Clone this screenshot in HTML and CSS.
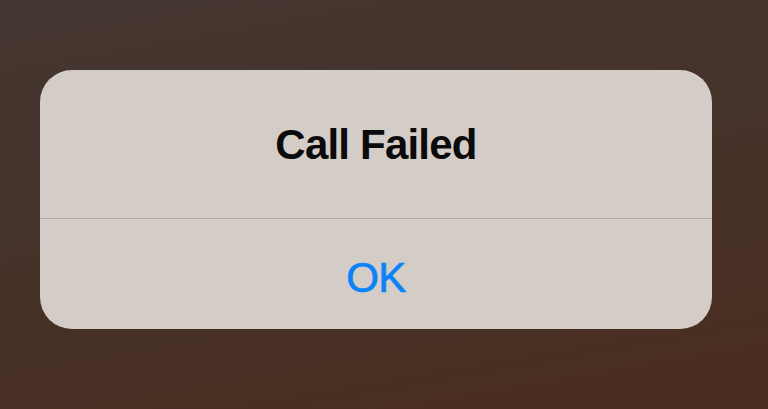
FILE: index.html
```html
<!DOCTYPE html>
<html>
<head>
<meta charset="utf-8">
<link rel="stylesheet" href="styles.css">
</head>
<body>
<div class="screen">
  <div class="alert">
    <div class="alert-body">
      <div class="alert-title">Call Failed</div>
    </div>
    <div class="alert-divider"></div>
    <div class="alert-actions">
      <div class="alert-button">OK</div>
    </div>
  </div>
</div>
</body>
</html>
```
FILE: styles.css
```css
html, body {
  margin: 0;
  padding: 0;
}
body {
  width: 768px;
  height: 409px;
  overflow: hidden;
  font-family: "Liberation Sans", Arial, sans-serif;
}
.screen {
  width: 768px;
  height: 409px;
  box-sizing: border-box;
  padding: 70px 56px 0 40px;
  background: linear-gradient(170deg, #443631 0%, #45322a 45%, #4a2d1e 100%);
}
.alert {
  width: 672px;
  height: 259px;
  background: #d4ccc7;
  border-radius: 32px;
  display: flex;
  flex-direction: column;
  overflow: hidden;
}
.alert-body {
  height: 148px;
  display: flex;
  align-items: center;
  justify-content: center;
  padding-top: 2px;
  box-sizing: border-box;
}
.alert-title {
  font-size: 42px;
  line-height: 1;
  font-weight: bold;
  color: #0b0b0b;
  letter-spacing: -0.8px;
}
.alert-divider {
  height: 1px;
  background: #b3aaa6;
}
.alert-actions {
  flex: 1;
  display: flex;
  align-items: center;
  justify-content: center;
  padding-top: 7px;
}
.alert-button {
  font-size: 42px;
  line-height: 1;
  color: #0a82f8;
  letter-spacing: -0.5px;
  -webkit-text-stroke: 0.7px #0a82f8;
}
```
